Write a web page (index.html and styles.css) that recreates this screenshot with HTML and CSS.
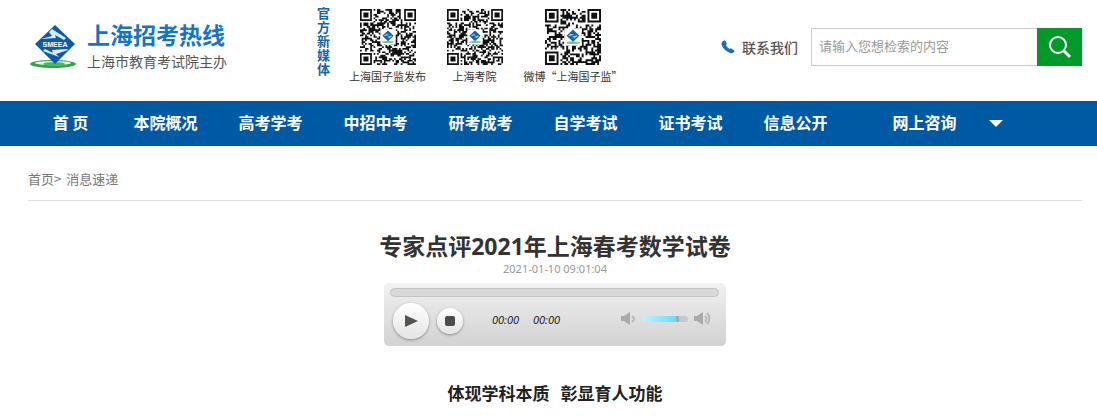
FILE: index.html
```html
<!DOCTYPE html>
<html lang="zh-CN">
<head>
<meta charset="utf-8">
<meta name="viewport" content="width=device-width, initial-scale=1">
<title>专家点评2021年上海春考数学试卷</title>
<link rel="stylesheet" href="styles.css">
</head>
<body>

<svg width="0" height="0" class="defs" aria-hidden="true">
  <symbol id="emblem" viewBox="0 0 46 44">
    <ellipse cx="23" cy="39" rx="21" ry="4" fill="#7cc892"/>
    <path d="M23 0L42 18L23 36L4 18Z" fill="#0f62ae"/>
    <path d="M28 7L17 12L27 15L12 19L9 17L20 11ZM19 30L29 25L20 22L34 17L37 19L27 26Z" fill="#a9d0ec"/>
  </symbol>
</svg>

<header class="header">
  <a class="logo" href="#">
    <svg class="logo-mark" viewBox="0 0 48 46">
      <ellipse cx="23" cy="39" rx="23" ry="4" fill="#2fa745"/>
      <ellipse cx="23" cy="38" rx="18" ry="2" fill="#e6f6e8"/>
      <ellipse cx="24" cy="39" rx="11" ry="2" fill="#4fb562"/>
      <path d="M25 0L45 19L25 39L5 19Z" fill="#0a5ba8"/>
      <path d="M22 4L36 13L34 15L25 10L26 13L11 14L22 11L19 7Z" fill="#dcecf8"/>
      <path d="M38 25L26 29L29 32L13 26L15 24L23 28L22 25L37 24Z" fill="#dcecf8"/>
      <text x="25" y="22" text-anchor="middle" class="logo-letters">SMEEA</text>
    </svg>
    <span class="logo-text">
      <strong>上海招考热线</strong>
      <span>上海市教育考试院主办</span>
    </span>
  </a>

  <div class="media">
    <p class="media-title">官方新媒体</p>
    <figure>
      <svg class="qr" data-size="33" data-seed="7"></svg>
      <figcaption>上海国子监发布</figcaption>
    </figure>
    <figure>
      <svg class="qr" data-size="33" data-seed="23"></svg>
      <figcaption>上海考院</figcaption>
    </figure>
    <figure class="wide">
      <svg class="qr" data-size="29" data-seed="51"></svg>
      <figcaption>微博“上海国子监”</figcaption>
    </figure>
  </div>

  <a class="contact" href="#">
    <svg width="14" height="14" viewBox="0 0 14 14"><path d="M1 2L3 0.5Q4 0 4.5 1L5.8 3.5Q6 4.300 5 5Q5.500 7 8.500 9Q9.500 8 10.300 8.500L13 10.200Q13.800 11 13 12Q11.500 13.800 9 13Q2 10 0.500 4.500Q0.300 3 1 2Z" fill="#1c6fb8"/></svg>
    <span>联系我们</span>
  </a>

  <form class="search">
    <input type="text" name="q" placeholder="请输入您想检索的内容" aria-label="检索">
    <button type="submit" aria-label="搜索">
      <svg width="24" height="24" viewBox="0 0 24 24" fill="none" stroke="#fff"><circle cx="10" cy="10" r="8" stroke-width="2"/><path d="M16 16L22 22" stroke-width="3"/></svg>
    </button>
  </form>
</header>

<nav class="nav">
  <a class="home" href="#">首 页</a>
  <a href="#">本院概况</a>
  <a href="#">高考学考</a>
  <a href="#">中招中考</a>
  <a href="#">研考成考</a>
  <a href="#">自学考试</a>
  <a href="#">证书考试</a>
  <a href="#">信息公开</a>
  <a class="more" href="#">网上咨询</a>
  <svg class="caret" width="14" height="7" viewBox="0 0 14 7"><path d="M0 0H14L7 7Z" fill="#fff"/></svg>
</nav>

<main class="content">
  <div class="crumbs"><a href="#">首页</a>&gt;<a class="current" href="#">消息速递</a></div>

  <article class="article">
    <h1>专家点评2021年上海春考数学试卷</h1>
    <time>2021-01-10 09:01:04</time>

    <div class="player">
      <div class="progress"></div>
      <div class="controls">
        <button class="play" type="button" aria-label="播放">
          <svg width="14" height="14" viewBox="0 0 14 14"><path d="M1 1L14 7L1 13Z" fill="#555650"/></svg>
        </button>
        <button class="stop" type="button" aria-label="停止">
          <svg width="10" height="10" viewBox="0 0 10 10"><rect width="10" height="10" rx="2" fill="#4c4c4c"/></svg>
        </button>
        <div class="times"><span>00:00</span><span>00:00</span></div>
        <div class="volume">
          <svg width="15" height="14" viewBox="0 0 15 14"><path d="M0 4H3L9 0V13L3 9H0Z" fill="#aaa"/><path d="M11 4q4 3 0 6" fill="none" stroke="#b8b8b8" stroke-width="2"/></svg>
          <input type="range" min="0" max="100" value="80" aria-label="音量">
          <svg width="17" height="14" viewBox="0 0 17 14"><path d="M0 4H3L9 0V13L3 9H0Z" fill="#aaa"/><path d="M11 4q3 3 0 6M13 1q5 5 0 11" fill="none" stroke="#b8b8b8" stroke-width="2"/></svg>
        </div>
      </div>
    </div>

    <h2><span>体现学科本质</span><span>彰显育人功能</span></h2>
  </article>
</main>

<script src="qr.js"></script>
</body>
</html>
```
FILE: styles.css
```css
* {
  box-sizing: border-box;
}

body {
  margin: 0;
  background: #fff;
  color: #333;
  font-family: "Noto Sans CJK SC", sans-serif;
  font-size: 13px;
}

a {
  color: inherit;
  text-decoration: none;
}

button {
  border: none;
  padding: 0;
  display: flex;
  align-items: center;
  justify-content: center;
  cursor: pointer;
}

.defs {
  position: absolute;
}

/* header */
.header {
  display: flex;
  align-items: flex-start;
  padding: 9px 15px 0 30px;
  height: 101px;
}

.logo {
  display: flex;
  gap: 9px;
  margin-top: 10px;
}

.logo-mark {
  width: 48px;
  height: 46px;
  margin-top: 6px;
}

.logo-letters {
  font: bold 7px "Liberation Sans", sans-serif;
  fill: #fff;
}

.logo-text {
  display: flex;
  flex-direction: column;
  font-size: 14px;
  line-height: 24px;
  color: #555;
}

.logo-text strong {
  font-size: 23px;
  line-height: 30px;
  color: #1474c8;
}

.media {
  display: flex;
  margin-left: 90px;
}

.media-title {
  width: 14px;
  margin: -3px 18px 0 0;
  font-weight: bold;
  line-height: 14px;
  color: #1464a8;
}

.media figure {
  display: flex;
  flex-direction: column;
  align-items: center;
  width: 77px;
  margin: 0 10px 0 0;
}

.media .wide {
  width: 100px;
}

.media figcaption {
  font-size: 11px;
  line-height: 22px;
  white-space: nowrap;
}

.qr {
  width: 56px;
  height: 56px;
}

.contact {
  display: flex;
  align-items: center;
  gap: 7px;
  margin: 27px 13px 0 auto;
  font-size: 14px;
  line-height: 22px;
  font-weight: 500;
  color: #555;
}

.search {
  display: flex;
  margin-top: 19px;
}

.search input {
  width: 226px;
  height: 38px;
  padding: 0 7px 4px;
  border: 1px solid #ccc;
  border-right: none;
  font: inherit;
}

.search input::placeholder {
  color: #999;
}

.search button {
  width: 45px;
  height: 38px;
  background: #009a2b;
}

/* navigation */
.nav {
  display: flex;
  align-items: center;
  padding-left: 28px;
  height: 45px;
  background: #0059a3;
  color: #fff;
  font-size: 16px;
  font-weight: bold;
}

.nav a {
  width: 105px;
  padding-bottom: 3px;
  text-align: center;
}

.nav .home {
  width: 85px;
}

.nav .more {
  margin-left: 24px;
}

.caret {
  margin-left: 12px;
}

/* article */
.content {
  padding: 0 15px 0 28px;
}

.crumbs {
  padding: 22px 0 10px;
  line-height: 22px;
  border-bottom: 1px solid #ddd;
  color: #777;
}

.crumbs .current {
  margin-left: 5px;
}

.article {
  display: flex;
  flex-direction: column;
  align-items: center;
}

.article h1 {
  margin: 29px 0 0;
  font-family: "Open Sans", "Noto Sans CJK SC", sans-serif;
  font-size: 23px;
  line-height: 32px;
}

.article time {
  font-family: "Noto Sans", sans-serif;
  font-size: 11px;
  line-height: 14px;
  color: #999;
}

.article h2 {
  display: flex;
  gap: 11px;
  margin: 35px 0 0;
  font-size: 17px;
  line-height: 24px;
  color: #222;
}

/* audio player */
.player {
  width: 342px;
  margin-top: 7px;
  padding: 5px 7px 5px 6px;
  border-radius: 5px;
  background: linear-gradient(#f1f1f1, #d2d2d2);
}

.progress {
  height: 9px;
  border: 1px solid #c4c4c4;
  border-radius: 5px;
  background: #d9d9d9;
}

.controls {
  display: flex;
  align-items: center;
  height: 44px;
  padding: 0 8px 0 3px;
}

.controls button {
  border-radius: 50%;
  background: linear-gradient(#fff, #e4e4e4);
  box-shadow: 0 1px 3px #888;
}

.controls .play {
  width: 36px;
  height: 36px;
  margin-top: 4px;
}

.controls .stop {
  width: 26px;
  height: 26px;
  margin: 4px 0 0 8px;
}

.times {
  display: flex;
  gap: 14px;
  margin-left: 29px;
  font-family: "Open Sans", sans-serif;
  font-size: 11px;
  font-style: italic;
  color: #111;
}

.volume {
  display: flex;
  align-items: center;
  gap: 6px;
  margin-left: auto;
}

.volume input {
  appearance: none;
  width: 46px;
  height: 6px;
  margin: 0;
  border-radius: 3px;
  background: linear-gradient(90deg, #c4f2fb, #5cdcf8 80%, #c8c8c8 80%);
}

.volume input::-webkit-slider-thumb {
  appearance: none;
  width: 3px;
  height: 6px;
  background: #8fb4bd;
}
```
FILE: qr.js
```js
// fills every .qr svg with modules, three finder squares and the emblem
document.querySelectorAll('.qr').forEach(function (svg) {
  const n = Number(svg.dataset.size);
  let seed = Number(svg.dataset.seed);
  let d = '';

  function finder(x, y) {
    d += `M${x} ${y}h7v7h-7zM${x + 1} ${y + 1}v5h5v-5zM${x + 2} ${y + 2}h3v3h-3z`;
  }

  for (let y = 0; y < n; y++) {
    for (let x = 0; x < n; x++) {
      seed = (seed * 16807) % 2147483647;
      const corner = (x < 8 && y < 8) || (x > n - 9 && y < 8) || (x < 8 && y > n - 9);
      if (!corner && (seed >> 8) % 100 < 50) d += `M${x} ${y}h1v1h-1z`;
    }
  }
  finder(0, 0);
  finder(n - 7, 0);
  finder(0, n - 7);

  const c = n / 2;
  svg.setAttribute('viewBox', `0 0 ${n} ${n}`);
  svg.innerHTML = `<path d="${d}" fill="#111"/>` +
    `<rect x="${c - 4.5}" y="${c - 4.5}" width="9" height="9" fill="#fff"/>` +
    `<use href="#emblem" x="${c - 4}" y="${c - 4}" width="8" height="8"/>`;
});
```
